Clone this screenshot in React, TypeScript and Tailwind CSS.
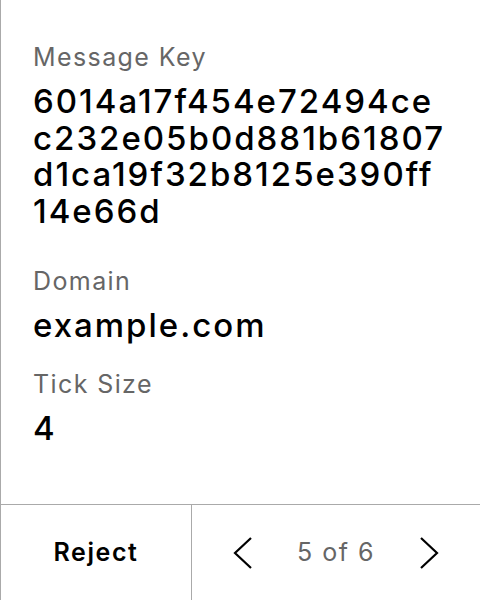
export default function App() {
  // rows as the device breaks the key
  const keyRows = ["6014a17f454e72494ce", "c232e05b0d881b61807", "d1ca19f32b8125e390ff", "14e66d"];

  const fields = [
    { label: "Message Key", rows: keyRows, extra: "mb-[12px]" },
    { label: "Domain", rows: ["example.com"], extra: "" },
    { label: "Tick Size", rows: ["4"], extra: "" },
  ];

  return (
    <div
      className="flex h-[600px] w-[480px] flex-col border-l border-[#aaaaaa] bg-white text-black"
      style={{ fontFamily: "Inter, 'Noto Sans', sans-serif" }}
    >
      <div className="flex flex-1 flex-col gap-[24px] pl-[32px] pr-[20px] pt-[41px]">
        {fields.map((f) => (
          <div key={f.label} className={"flex flex-col gap-[10px] " + f.extra}>
            <div className="text-[25px] leading-[32px] tracking-[1.4px] text-[#666666]">{f.label}</div>
            <div className="text-[33px] font-medium leading-[36.6px] tracking-[2px]">
              {f.rows.map((r) => (
                <div key={r} className="whitespace-nowrap">
                  {r}
                </div>
              ))}
            </div>
          </div>
        ))}
      </div>

      {/* footer */}
      <div className="flex h-[96px] border-t border-[#aaaaaa]">
        <button className="flex w-[191px] items-center justify-center border-r border-[#aaaaaa] text-[25px] font-semibold tracking-[1.6px]">
          Reject
        </button>
        <div className="flex flex-1 items-center justify-between px-[41px]">
          <svg width="20" height="32" viewBox="0 0 20 32" fill="none" stroke="black" strokeWidth="2.2">
            <path d="M18 1 L2 16 L18 31" />
          </svg>
          <span className="text-[25px] tracking-[1.5px] text-[#666666]">5 of 6</span>
          <svg width="20" height="32" viewBox="0 0 20 32" fill="none" stroke="black" strokeWidth="2.2">
            <path d="M2 1 L18 16 L2 31" />
          </svg>
        </div>
      </div>
    </div>
  );
}
